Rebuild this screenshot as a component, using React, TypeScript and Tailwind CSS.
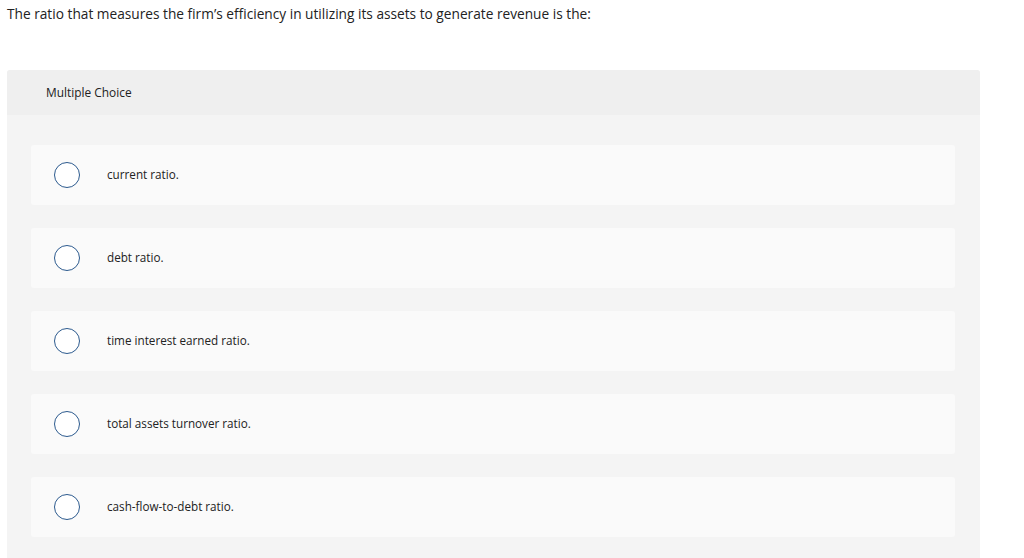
const options = [
  'current ratio.',
  'debt ratio.',
  'time interest earned ratio.',
  'total assets turnover ratio.',
  'cash-flow-to-debt ratio.',
]

export default function App() {
  return (
    <div
      className="min-h-[558px] bg-white text-[#222]"
      style={{ fontFamily: "'Open Sans', Arial, sans-serif" }}
    >
      <p className="px-[7px] pt-[5px] text-[13.7px] leading-[18px]">
        The ratio that measures the firm’s efficiency in utilizing its assets to generate revenue is the:
      </p>

      <div className="mt-[47px] ml-[7px] w-[973px] overflow-hidden rounded-t-[3px] bg-[#f4f4f4]">
        <div className="flex h-[45px] items-center bg-[#efefef] pl-[39px] text-[11.9px]">
          Multiple Choice
        </div>
        <div className="flex flex-col gap-[23px] pl-[24px] pr-[25px] pt-[30px] pb-[22px]">
          {options.map((label) => (
            <label
              key={label}
              className="flex h-[60px] cursor-pointer items-center rounded-[3px] bg-[#fafafa] pl-[23px]"
            >
              <span className="h-[26px] w-[26px] shrink-0 rounded-full border border-[#2c5a8e] bg-white" />
              <span className="ml-[27px] text-[11.7px]">{label}</span>
            </label>
          ))}
        </div>
      </div>
    </div>
  )
}
